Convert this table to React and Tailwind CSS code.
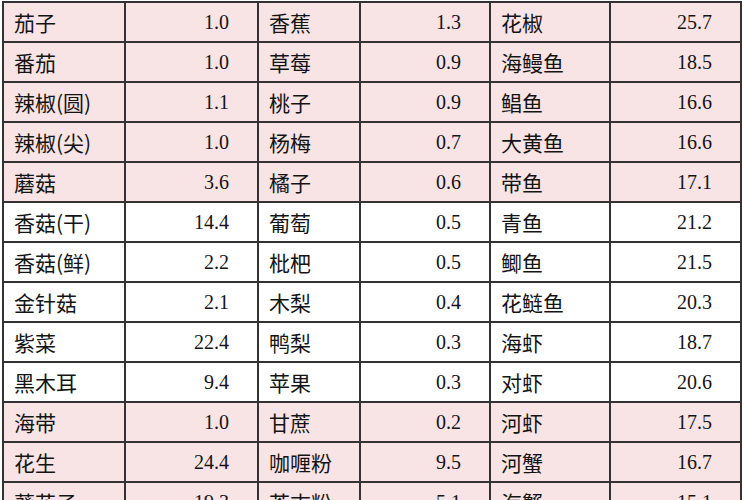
// 食物含量对照表（截图复刻）
const ROWS = [
  ['茄子', '1.0', '香蕉', '1.3', '花椒', '25.7'],
  ['番茄', '1.0', '草莓', '0.9', '海鳗鱼', '18.5'],
  ['辣椒(圆)', '1.1', '桃子', '0.9', '鲳鱼', '16.6'],
  ['辣椒(尖)', '1.0', '杨梅', '0.7', '大黄鱼', '16.6'],
  ['蘑菇', '3.6', '橘子', '0.6', '带鱼', '17.1'],
  ['香菇(干)', '14.4', '葡萄', '0.5', '青鱼', '21.2'],
  ['香菇(鲜)', '2.2', '枇杷', '0.5', '鲫鱼', '21.5'],
  ['金针菇', '2.1', '木梨', '0.4', '花鲢鱼', '20.3'],
  ['紫菜', '22.4', '鸭梨', '0.3', '海虾', '18.7'],
  ['黑木耳', '9.4', '苹果', '0.3', '对虾', '20.6'],
  ['海带', '1.0', '甘蔗', '0.2', '河虾', '17.5'],
  ['花生', '24.4', '咖喱粉', '9.5', '河蟹', '16.7'],
  ['葵花子', '19.3', '芥末粉', '5.1', '海蟹', '15.1'],
];

// 粉色底的行
const PINK = [0, 1, 2, 3, 4, 10, 11, 12];

function Cell({ children, num, pink }) {
  return (
    <div
      className={`h-[38px] flex items-center leading-none text-[#141414] ${
        pink ? 'bg-[#f8e3e5]' : 'bg-white'
      } ${num ? 'justify-end pr-[28px] text-[20px]' : 'pl-[10px] text-[21px]'}`}
    >
      <span
        className={
          num
            ? "font-['Liberation_Serif',serif]"
            : "font-['Noto_Sans_CJK_SC',sans-serif]"
        }
      >
        {children}
      </span>
    </div>
  );
}

export default function App() {
  return (
    <div className="w-[750px] h-[500px] overflow-hidden bg-white">
      <div className="ml-[2px] mt-[1px] w-[740px] grid grid-cols-[120px_131px_100px_128px_118px_129px] gap-[2px] p-[2px] bg-[#333333]">
        {ROWS.map((row, i) =>
          row.map((v, j) => (
            <Cell key={`${i}-${j}`} num={j % 2 === 1} pink={PINK.includes(i)}>
              {v}
            </Cell>
          ))
        )}
      </div>
    </div>
  );
}
